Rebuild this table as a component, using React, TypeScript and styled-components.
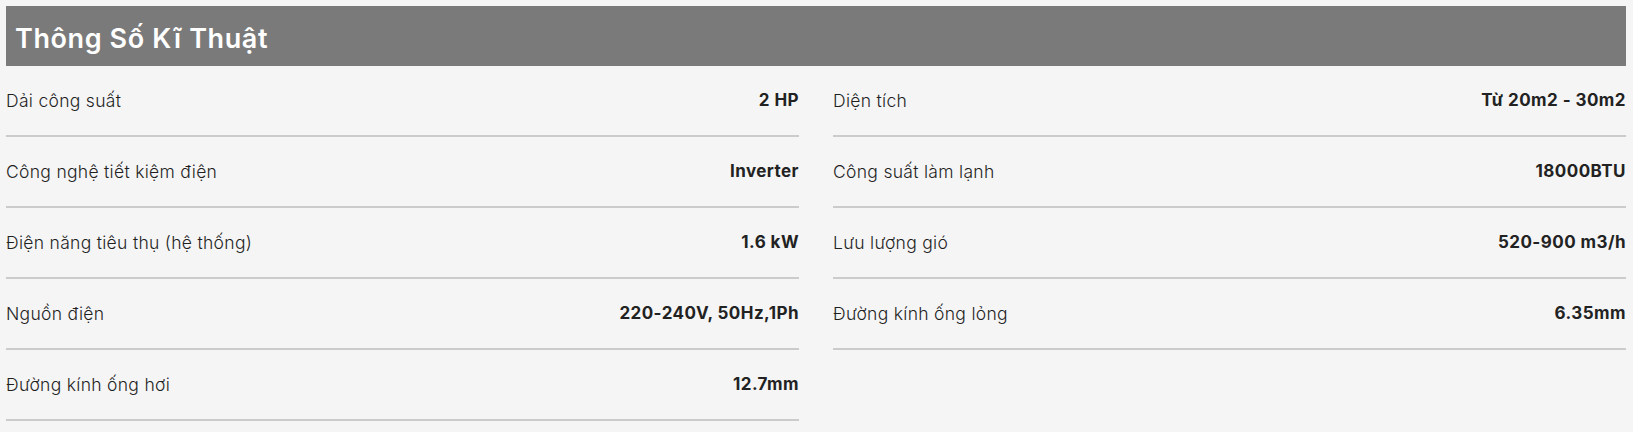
import React from 'react';
import styled, { createGlobalStyle } from 'styled-components';

const GlobalStyle = createGlobalStyle`
  body {
    margin: 0;
    background: #f5f5f5;
    font-family: Inter, "Noto Sans", sans-serif;
    color: #222;
  }
`;

const Wrapper = styled.div`
  padding: 6px 7px 0 6px;
`;

const Header = styled.h2`
  margin: 0;
  height: 60px;
  box-sizing: border-box;
  display: flex;
  align-items: center;
  padding: 4px 9px 0;
  background: #7a7a7a;
  color: #fff;
  font-size: 27px;
  font-weight: 600;
  letter-spacing: 0.6px;
`;

const Grid = styled.div`
  display: grid;
  grid-template-columns: 1fr 1fr;
  column-gap: 34px;
`;

const Column = styled.div`
  display: flex;
  flex-direction: column;
`;

const Row = styled.div`
  display: flex;
  align-items: center;
  justify-content: space-between;
  height: 68px;
  border-bottom: 2px solid #cbcbcb;
  padding-bottom: 1px;
`;

const Label = styled.span`
  font-size: 17.5px;
  font-weight: 300;
  letter-spacing: 0.3px;
  color: #1f1f1f;
`;

const Value = styled.span`
  font-size: 17px;
  font-weight: 700;
  letter-spacing: 0.45px;
  color: #222;
`;

const left = [
  ['Dải công suất', '2 HP'],
  ['Công nghệ tiết kiệm điện', 'Inverter'],
  ['Điện năng tiêu thụ (hệ thống)', '1.6 kW'],
  ['Nguồn điện', '220-240V, 50Hz,1Ph'],
  ['Đường kính ống hơi', '12.7mm'],
];

const right = [
  ['Diện tích', 'Từ 20m2 - 30m2'],
  ['Công suất làm lạnh', '18000BTU'],
  ['Lưu lượng gió', '520-900 m3/h'],
  ['Đường kính ống lỏng', '6.35mm'],
];

const SpecColumn = ({ rows }: { rows: string[][] }) => (
  <Column>
    {rows.map(([label, value]) => (
      <Row key={label}>
        <Label>{label}</Label>
        <Value>{value}</Value>
      </Row>
    ))}
  </Column>
);

const App = () => (
  <Wrapper>
    <GlobalStyle />
    <Header>Thông Số Kĩ Thuật</Header>
    <Grid>
      <SpecColumn rows={left} />
      <SpecColumn rows={right} />
    </Grid>
  </Wrapper>
);

export default App;
